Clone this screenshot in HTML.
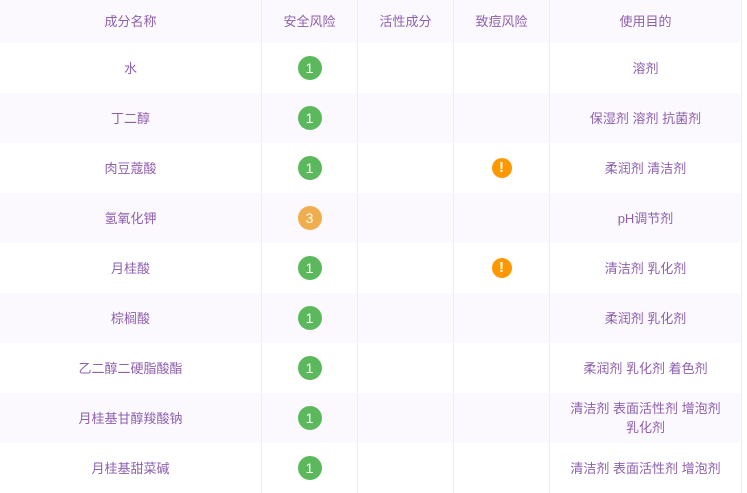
<!DOCTYPE html><html><head><meta charset="utf-8"><style>
body{margin:0;background:#fff;width:747px;height:490px;overflow:hidden;font-family:"Liberation Sans","Noto Sans CJK SC",sans-serif;font-size:13px;color:#8e5fae}
.r{position:absolute;left:0;width:742px;display:flex}
.r div{box-sizing:border-box;display:flex;align-items:center;justify-content:center;text-align:center;border-right:1px solid #f0eef3;line-height:19px}
.c1{width:262px}.c2{width:96px}.c3{width:96px}.c4{width:96px}.c5{width:192px;padding:0 12px}
.t{background:#fbf9fe}
.b{width:24px;height:24px;border-radius:50%;background:#5cb85c;color:#fff;font-size:14px;line-height:24px;text-align:center;display:inline-block}
.o{background:#f0ad4e}
.w{width:20px;height:20px;border-radius:50%;background:#ff9800;color:#fff;font-weight:bold;font-size:15px;line-height:20px;text-align:center;display:inline-block}
</style></head><body>
<div class="r t" style="top:0;height:43px"><div class="c1">成分名称</div><div class="c2">安全风险</div><div class="c3">活性成分</div><div class="c4">致痘风险</div><div class="c5">使用目的</div></div>
<div class="r" style="top:43px;height:50px"><div class="c1">水</div><div class="c2"><span class="b">1</span></div><div class="c3"></div><div class="c4"></div><div class="c5">溶剂</div></div>
<div class="r t" style="top:93px;height:50px"><div class="c1">丁二醇</div><div class="c2"><span class="b">1</span></div><div class="c3"></div><div class="c4"></div><div class="c5">保湿剂 溶剂 抗菌剂</div></div>
<div class="r" style="top:143px;height:50px"><div class="c1">肉豆蔻酸</div><div class="c2"><span class="b">1</span></div><div class="c3"></div><div class="c4"><span class="w">!</span></div><div class="c5">柔润剂 清洁剂</div></div>
<div class="r t" style="top:193px;height:50px"><div class="c1">氢氧化钾</div><div class="c2"><span class="b o">3</span></div><div class="c3"></div><div class="c4"></div><div class="c5">pH调节剂</div></div>
<div class="r" style="top:243px;height:50px"><div class="c1">月桂酸</div><div class="c2"><span class="b">1</span></div><div class="c3"></div><div class="c4"><span class="w">!</span></div><div class="c5">清洁剂 乳化剂</div></div>
<div class="r t" style="top:293px;height:50px"><div class="c1">棕榈酸</div><div class="c2"><span class="b">1</span></div><div class="c3"></div><div class="c4"></div><div class="c5">柔润剂 乳化剂</div></div>
<div class="r" style="top:343px;height:50px"><div class="c1">乙二醇二硬脂酸酯</div><div class="c2"><span class="b">1</span></div><div class="c3"></div><div class="c4"></div><div class="c5">柔润剂 乳化剂 着色剂</div></div>
<div class="r t" style="top:393px;height:50px"><div class="c1">月桂基甘醇羧酸钠</div><div class="c2"><span class="b">1</span></div><div class="c3"></div><div class="c4"></div><div class="c5">清洁剂 表面活性剂 增泡剂<br>乳化剂</div></div>
<div class="r" style="top:443px;height:50px"><div class="c1">月桂基甜菜碱</div><div class="c2"><span class="b">1</span></div><div class="c3"></div><div class="c4"></div><div class="c5">清洁剂 表面活性剂 增泡剂</div></div>
</body></html>
